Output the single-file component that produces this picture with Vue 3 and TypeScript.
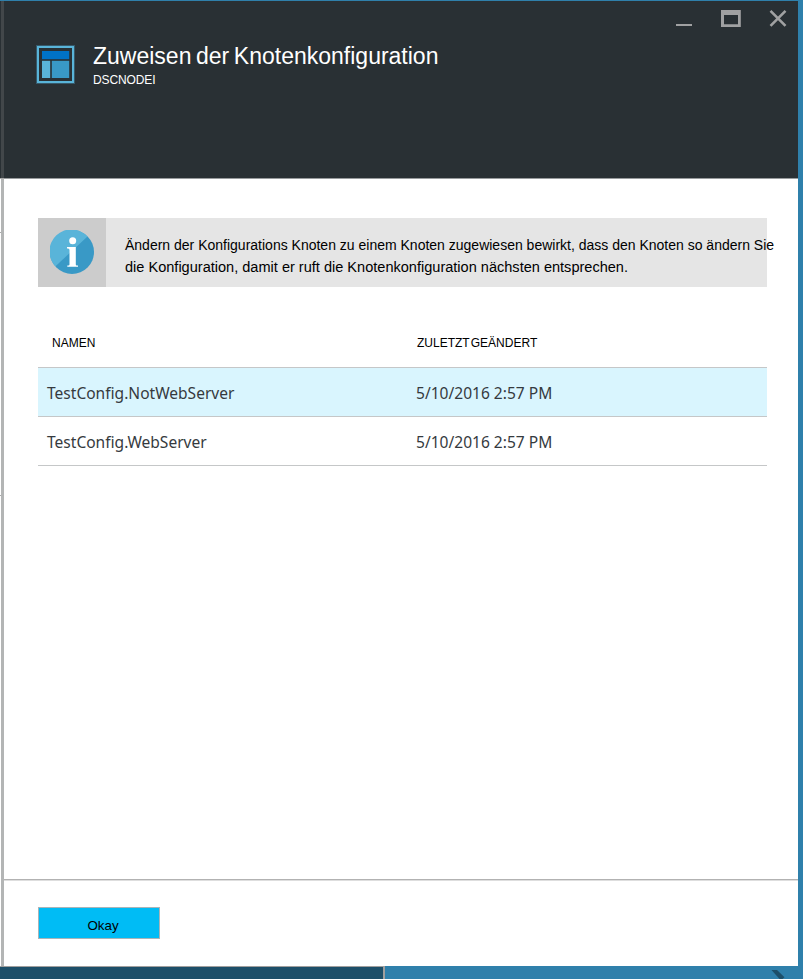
<script setup lang="ts">
interface NodeConfiguration {
  name: string
  modified: string
  selected: boolean
}

const configurations: NodeConfiguration[] = [
  { name: 'TestConfig.NotWebServer', modified: '5/10/2016 2:57 PM', selected: true },
  { name: 'TestConfig.WebServer', modified: '5/10/2016 2:57 PM', selected: false },
]
</script>

<template>
  <div class="page">
    <div class="middle">
      <div class="edge">
        <i class="edge-head"></i>
        <i class="edge-tick"></i>
        <i class="edge-tick"></i>
      </div>
      <main class="blade">
        <header class="head">
          <svg class="logo" width="39" height="39" viewBox="0 0 39 39">
            <rect x="0" y="0" width="39" height="39" fill="#36596a" />
            <rect x="1" y="1" width="37" height="37" fill="#59b4d9" />
            <rect x="3" y="3" width="33" height="33" fill="#293034" />
            <rect x="6" y="6" width="27.200" height="8.200" fill="#0072c6" />
            <rect x="6" y="15.800" width="8.200" height="17.200" fill="#59b4d9" />
            <rect x="15.800" y="15.800" width="17.400" height="17.200" fill="#3999c6" />
          </svg>
          <div class="titles">
            <h1>Zuweisen der Knotenkonfiguration</h1>
            <p>DSCNODEI</p>
          </div>
          <svg class="controls" width="112" height="18" viewBox="0 0 112 18">
            <rect x="0" y="15" width="16" height="2" fill="#a0a1a2" />
            <path d="M45 1h19.800v17H45zM48 6v9.200h14V6z" fill="#a0a1a2" fill-rule="evenodd" />
            <path d="M94.500 1.800l15 15M109.500 1.800l-15 15" stroke="#a0a1a2" stroke-width="2.600" fill="none" />
          </svg>
        </header>

        <section class="body">
          <div class="notice">
            <div class="notice-icon">
              <svg width="44" height="44" viewBox="0 0 44 44">
                <circle cx="22" cy="22" r="22" fill="#3999c6" />
                <path d="M5.300 36.400A22 22 0 0 1 37.500 6.400z" fill="#59b4d9" />
                <circle cx="22.700" cy="10.700" r="3.500" fill="#fff" />
                <path d="M17 17h8.800v17.500q0 1 1 1h1.200v1.300H17.300v-1.300h1.200q1 0 1-1V20q0-1.500-1.500-1.500h-1z" fill="#fff" />
              </svg>
            </div>
            <p>
              <span class="first">Ändern der Konfigurations Knoten zu einem Knoten zugewiesen bewirkt, dass den Knoten so ändern Sie</span>
              <span>die Konfiguration, damit er ruft die Knotenkonfiguration nächsten entsprechen.</span>
            </p>
          </div>

          <div class="table">
            <div class="row labels">
              <span>NAMEN</span>
              <span class="label-modified">ZULETZT GEÄNDERT</span>
            </div>
            <div v-for="c in configurations" :key="c.name" class="row item" :class="{ selected: c.selected }">
              <span>{{ c.name }}</span>
              <span>{{ c.modified }}</span>
            </div>
          </div>
        </section>

        <footer class="foot">
          <button type="button">Okay</button>
        </footer>
      </main>
    </div>
    <div class="scroll">
      <div class="thumb"></div>
      <svg class="arrow" width="16" height="13" viewBox="0 0 16 13">
        <path d="M0.500 4h5.500l7.500 7.300-2 1.700H8.500z" fill="#1d4f69" />
      </svg>
    </div>
  </div>
</template>

<style>
body {
  overflow: hidden;
}
</style>

<style scoped>
.page {
  box-sizing: border-box;
  width: 803px;
  height: 979px;
  padding-top: 1px;
  background: #2f80ab;
  font-family: "Liberation Sans", Arial, sans-serif;
  display: flex;
  flex-direction: column;
}
.middle {
  height: 965px;
  display: flex;
}
.edge {
  box-sizing: border-box;
  width: 4px;
  background: linear-gradient(to right, #fff 1px, #b3b5b5 1px);
}
.edge-head {
  display: block;
  height: 177px;
  background: linear-gradient(to right, #293034 1px, #42474a 1px);
  border-bottom: 1px solid #aaa;
}
.edge-tick {
  display: block;
  width: 1px;
  height: 1px;
  margin-top: 53px;
  background: #aaa;
}
.edge-tick + .edge-tick {
  margin-top: 262px;
}
.blade {
  width: 794px;
  background: #fff;
  display: flex;
  flex-direction: column;
}
.head {
  box-sizing: border-box;
  height: 178px;
  background: #293034;
  border-bottom: 1px solid #989b9d;
  display: flex;
  align-items: flex-start;
  color: #fff;
}
.logo {
  margin: 44px 0 0 32px;
}
.titles {
  width: 579px;
  margin: 41px 0 0 18px;
}
h1,
p {
  margin: 0;
  font-weight: 400;
  white-space: nowrap;
}
h1 {
  font-size: 23px;
  line-height: 28px;
  word-spacing: -1.800px;
}
.titles p {
  padding-top: 1px;
  font-size: 12px;
  line-height: 18px;
  letter-spacing: -0.120px;
}
.controls {
  margin: 8px 0 0 4px;
}
.body {
  height: 700px;
  box-sizing: border-box;
  padding: 39px 31px 0 34px;
}
.notice {
  height: 69px;
  background: #e5e5e5;
  display: flex;
}
.notice-icon {
  box-sizing: border-box;
  flex: none;
  width: 68px;
  padding-bottom: 1px;
  background: #ccc;
  display: flex;
  align-items: center;
  justify-content: center;
}
.notice p {
  padding: 16px 0 0 19px;
  font-size: 14.550px;
  line-height: 22px;
  color: #000;
}
.notice span {
  display: block;
}
.notice .first {
  font-size: 14px;
}
.table {
  margin-top: 31px;
}
.row {
  box-sizing: border-box;
  height: 49px;
  display: grid;
  grid-template-columns: 369px 1fr;
  align-items: center;
  padding-left: 9px;
  border-bottom: 1px solid #c5c7c8;
}
.labels {
  height: 50px;
  grid-template-columns: 365px 1fr;
  padding: 1px 0 0 14px;
  font-size: 12px;
  color: #000;
}
.label-modified {
  word-spacing: -2px;
}
.item {
  font-family: "Noto Sans", "Open Sans", sans-serif;
  font-size: 15.550px;
  color: #353a3e;
  padding-top: 1px;
}
.selected {
  background: #d9f5fe;
}
.foot {
  box-sizing: border-box;
  flex: 1;
  border-top: 1px solid #b2b2b2;
  box-shadow: inset 0 1px #dedede;
  padding: 27px 0 0 34px;
}
button {
  box-sizing: border-box;
  width: 122px;
  height: 32px;
  border: 1px solid #a9b4b8;
  background: #00bcf5;
  padding: 5px 0 0 8px;
  font-family: inherit;
  font-size: 13.330px;
  color: #000;
}
.scroll {
  height: 13px;
  display: flex;
  justify-content: space-between;
}
.thumb {
  box-sizing: border-box;
  width: 385px;
  border: solid #a09f9e;
  border-width: 1px 2px 0 0;
  background: #1d4f69;
}
.arrow {
  margin-right: 16px;
}
</style>
